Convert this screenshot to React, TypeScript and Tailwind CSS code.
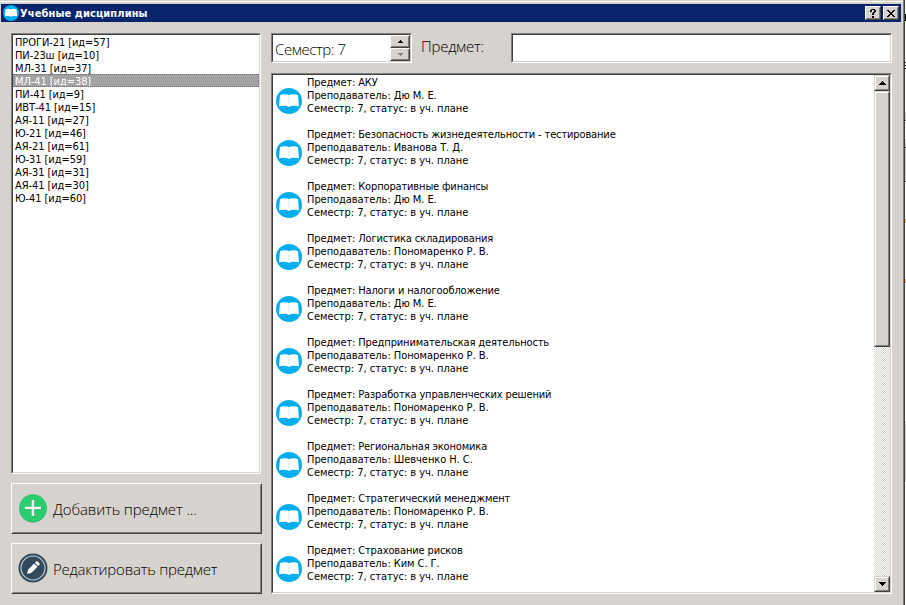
import React from "react";

const SUNKEN =
  "border border-t-[#808080] border-l-[#808080] border-r-white border-b-white";
const SUNKEN_IN =
  "border border-t-[#404040] border-l-[#404040] border-r-[#d6d3ce] border-b-[#d6d3ce] bg-white";
const RAISED =
  "border border-t-white border-l-white border-r-[#404040] border-b-[#404040] bg-[#d6d3ce]";
const RAISED_IN =
  "h-full w-full border border-t-transparent border-l-transparent border-r-[#808080] border-b-[#808080]";
const SCROLL =
  "border border-t-[#d6d3ce] border-l-[#d6d3ce] border-r-[#404040] border-b-[#404040] bg-[#d6d3ce]";
const SCROLL_IN =
  "h-full w-full border border-t-white border-l-white border-r-[#808080] border-b-[#808080]";
const SMALL =
  "font-['DejaVu_Sans_Condensed','DejaVu_Sans',sans-serif] text-[11px] leading-[13px] whitespace-pre";
const LARGE = "font-['Open_Sans','Noto_Sans',sans-serif] text-[15px] font-light whitespace-pre";

const groups = [
  "ПРОГИ-21 [ид=57]",
  "ПИ-23ш [ид=10]",
  "МЛ-31 [ид=37]",
  "МЛ-41 [ид=38]",
  "ПИ-41 [ид=9]",
  "ИВТ-41 [ид=15]",
  "АЯ-11 [ид=27]",
  "Ю-21 [ид=46]",
  "АЯ-21 [ид=61]",
  "Ю-31 [ид=59]",
  "АЯ-31 [ид=31]",
  "АЯ-41 [ид=30]",
  "Ю-41 [ид=60]",
];

const subjects = [
  ["АКУ", "Дю М. Е."],
  ["Безопасность жизнедеятельности - тестирование", "Иванова Т. Д."],
  ["Корпоративные финансы", "Дю М. Е."],
  ["Логистика складирования", "Пономаренко Р. В."],
  ["Налоги и налогообложение", "Дю М. Е."],
  ["Предпринимательская деятельность", "Пономаренко Р. В."],
  ["Разработка управленческих решений", "Пономаренко Р. В."],
  ["Региональная экономика", "Шевченко Н. С."],
  ["Стратегический менеджмент", "Пономаренко Р. В."],
  ["Страхование рисков", "Ким С. Г."],
];

function Sunken({ className = "", children }: { className?: string; children?: React.ReactNode }) {
  return (
    <div className={`${SUNKEN} ${className}`}>
      <div className={`${SUNKEN_IN} flex h-full w-full overflow-hidden`}>{children}</div>
    </div>
  );
}

function Raised({
  className = "",
  scroll = false,
  children,
}: {
  className?: string;
  scroll?: boolean;
  children?: React.ReactNode;
}) {
  return (
    <div className={`${scroll ? SCROLL : RAISED} shrink-0 ${className}`}>
      <div className={`${scroll ? SCROLL_IN : RAISED_IN} flex items-center justify-center`}>{children}</div>
    </div>
  );
}

function Book({ className }: { className: string }) {
  return (
    <svg viewBox="0 0 26 26" className={className}>
      <circle cx="13" cy="13" r="13" fill="#00adef" />
      <path
        d="M4 7.2Q5.5 6.2 8.5 6.2Q12 6.2 13 7.2Q14 6.2 17.5 6.2Q20.500 6.2 22 7.200L23 18.300Q20.500 17.600 17.500 17.700Q14.500 17.800 14 18.700H12Q11.500 17.800 8.500 17.700Q5.500 17.600 3 18.300Z"
        fill="#fff"
      />
      <path d="M13 7.500V17.500" stroke="#d3effa" strokeWidth="1" />
    </svg>
  );
}

function Arrow({ down = false, small = false, color = "#000" }: { down?: boolean; small?: boolean; color?: string }) {
  const box = small ? (down ? "1 1 5 3" : "1 0 5 3") : "0 0 7 4";
  return (
    <svg width={small ? 5 : 7} height={small ? 3 : 4} viewBox={box} shapeRendering="crispEdges">
      <path
        d={down ? "M0 0h7v1H0zM1 1h5v1H1zM2 2h3v1H2zM3 3h1v1H3z" : "M3 0h1v1H3zM2 1h3v1H2zM1 2h5v1H1zM0 3h7v1H0z"}
        fill={color}
      />
    </svg>
  );
}

function TitleBar() {
  return (
    <header className="ml-px flex h-[18px] w-[900px] items-center bg-[#08246b] pl-[2px] pr-[2px]">
      <Book className="h-4 w-4" />
      <h1 className={`${SMALL} ml-px grow font-bold tracking-[0.1px] text-white`}>Учебные дисциплины</h1>
      <Raised className="h-[14px] w-4">
        <svg width="6" height="9" viewBox="0 0 6 9" shapeRendering="crispEdges">
          <path d="M1 0h4v1H1zM0 1h2v2H0zM4 1h2v2H4zM3 3h2v1H3zM2 4h2v2H2zM2 7h2v2H2z" />
        </svg>
      </Raised>
      <Raised className="ml-[2px] h-[14px] w-4">
        <svg width="8" height="7" viewBox="0 0 8 7" shapeRendering="crispEdges">
          <path d="M0 0h2v1H0zM6 0h2v1H6zM1 1h2v1H1zM5 1h2v1H5zM2 2h4v1H2zM3 3h2v1H3zM2 4h4v1H2zM1 5h2v1H1zM5 5h2v1H5zM0 6h2v1H0zM6 6h2v1H6z" />
        </svg>
      </Raised>
    </header>
  );
}

function ActionButton({ icon, children }: { icon: React.ReactNode; children: React.ReactNode }) {
  return (
    <button className={`${RAISED} h-[51px] w-[251px]`}>
      <span className={`${RAISED_IN} flex items-center pl-[5px]`}>
        {icon}
        {children}
      </span>
    </button>
  );
}

function BackgroundEdge() {
  return (
    <div className="flex h-full w-px flex-col bg-white">
      <i className="mt-[14px] h-[7px] bg-black" />
      <i className="mt-[41px] h-px bg-black" />
      <i className="mt-[2px] h-px bg-black" />
      <i className="mt-[2px] h-px bg-black" />
      <i className="mt-[43px] h-[8px] bg-[#d6d3ce]" />
      <i className="h-px bg-[#404040]" />
      <i className="mt-[18px] h-[8px] bg-[#d6d3ce]" />
      <i className="h-px bg-[#404040]" />
      <i className="h-[33px] bg-[#d0d0d0]" />
      <i className="h-px bg-[#404040]" />
      <i className="mt-[37px] h-[4px] bg-[#f5a818]" />
      <i className="mt-[56px] h-[4px] bg-[#f5a818]" />
      <i className="mt-[138px] h-[61px] bg-[#d6d3ce]" />
    </div>
  );
}

export default function App() {
  return (
    <div className="flex h-[605px] w-[906px] overflow-hidden bg-white text-black">
      <div className="h-full w-[905px] border-r border-[#404040]">
        <div className="flex h-full w-full flex-col border-r border-[#808080] bg-[#d6d3ce]">
          <div className="mt-px mb-[2px] h-px shrink-0 bg-white" />
          <TitleBar />
          <main className="flex gap-[9px] pt-[11px] pl-[11px]">
            <aside className="flex w-[251px] flex-col gap-[9px]">
              <Sunken className="h-[441px] w-[250px]">
                <ul className="w-full">
                  {groups.map((g, i) => (
                    <li
                      key={g}
                      className={`${SMALL} h-[13px] pl-[2px] tracking-[-0.08px] first:mt-0 ${
                        i === 3 ? "bg-[#a5a2a5] text-white outline-1 -outline-offset-1 outline-dotted outline-[#6b696b]" : ""
                      }`}
                    >
                      <span className="block pt-px">{g}</span>
                    </li>
                  ))}
                </ul>
              </Sunken>
              <ActionButton
                icon={
                  <svg width="30" height="30" viewBox="0 0 30 30" className="relative -top-px">
                    <circle cx="15" cy="15.7" r="13.7" fill="#25ae60" />
                    <circle cx="15" cy="15" r="13.7" fill="#2bcc71" />
                    <path d="M15 7v16M7 15h16" stroke="#24a65c" strokeWidth="3" transform="translate(.5 .8)" />
                    <path d="M15 7v16M7 15h16" stroke="#f0f4f2" strokeWidth="2.6" />
                  </svg>
                }
              >
                <span className={`${LARGE} ml-[5px] pt-[2px] tracking-[-0.1px]`}>Добавить предмет ...</span>
              </ActionButton>
              <ActionButton
                icon={
                  <svg width="30" height="30" viewBox="0 0 30 30" className="relative -top-px">
                    <circle cx="15" cy="15" r="14.5" fill="#324a5e" />
                    <circle cx="15" cy="15" r="12" fill="none" stroke="#c9ced0" strokeWidth="1.1" />
                    <path d="M9 21l1.200-4.500 6-6 3.300 3.300-6 6zM17 9.700l1.300-1.200q.8-.6 1.600.2l1.500 1.500q.7.800 0 1.500L20.200 13z" fill="#fff" />
                  </svg>
                }
              >
                <span className={`${LARGE} ml-[5px] pt-[2px] tracking-[-0.2px]`}>Редактировать предмет</span>
              </ActionButton>
            </aside>
            <section className="flex w-[621px] flex-col gap-[10px]">
              <div className="flex h-[30px]">
                <Sunken className="h-[30px] w-[141px]">
                  <span className={`${LARGE} w-[117px] shrink-0 pl-[2px] leading-[28px] tracking-[-0.4px]`}>Семестр: 7</span>
                  <div className="flex w-5 shrink-0 flex-col">
                    <Raised className="h-[13px] w-5">
                      <Arrow small />
                    </Raised>
                    <Raised className="h-[13px] w-5">
                      <Arrow down small color="#808080" />
                    </Raised>
                  </div>
                </Sunken>
                <label className={`${LARGE} w-[99px] pl-[9px] leading-[26px] tracking-[-0.25px]`}>Предмет:</label>
                <Sunken className="h-[30px] w-[381px]" />
              </div>
              <Sunken className="h-[521px] w-[621px]">
                <ul className="grow">
                  {subjects.map(([name, teacher]) => (
                    <li key={name} className="flex h-[52px] pl-[3px]">
                      <Book className="mt-[13px] h-[26px] w-[26px]" />
                      <div className={`${SMALL} ml-[5px] pt-px`}>
                        <p className="tracking-[-0.14px]">Предмет: {name}</p>
                        <p className="tracking-[-0.06px]">Преподаватель: {teacher}</p>
                        <p className="tracking-[-0.03px]">Семестр: 7, статус: в уч. плане</p>
                      </div>
                    </li>
                  ))}
                </ul>
                <div className="flex h-full w-4 flex-col justify-between bg-[repeating-conic-gradient(#fff_0_25%,#d6d3ce_0_50%)] bg-[length:2px_2px]">
                  <div>
                    <Raised scroll className="h-4 w-4">
                      <Arrow />
                    </Raised>
                    <Raised scroll className="h-[256px] w-4" />
                  </div>
                  <Raised scroll className="h-4 w-4">
                    <Arrow down />
                  </Raised>
                </div>
              </Sunken>
            </section>
          </main>
        </div>
      </div>
      <BackgroundEdge />
    </div>
  );
}
